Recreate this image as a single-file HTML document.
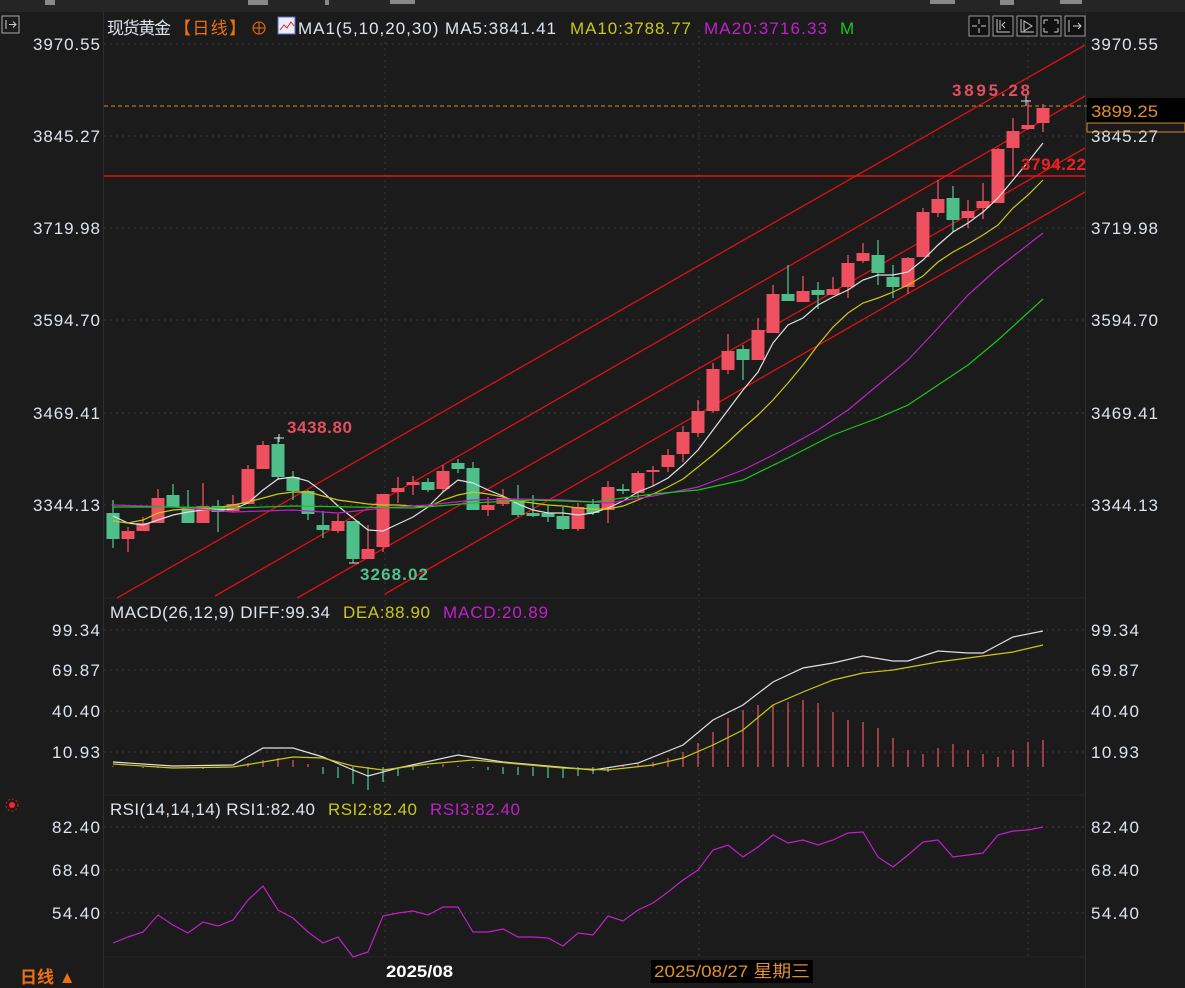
<!DOCTYPE html>
<html><head><meta charset="utf-8">
<style>
html,body{margin:0;padding:0;background:#1b1b1b;width:1185px;height:988px;overflow:hidden}
svg{display:block}
text{font-family:"Liberation Sans","Noto Sans CJK SC",sans-serif}
</style></head><body>
<svg id="s" width="1185" height="988" xmlns="http://www.w3.org/2000/svg">
<rect width="1185" height="988" fill="#1b1b1b"/>
<rect width="1185" height="12" fill="#252525"/>
<g fill="#888"><rect x="45" y="0" width="10" height="5"/><rect x="248" y="0" width="20" height="5"/><rect x="325" y="0" width="4" height="5"/><rect x="390" y="0" width="25" height="4"/><rect x="930" y="0" width="25" height="4"/><rect x="1000" y="0" width="14" height="5"/><rect x="1060" y="0" width="22" height="4"/></g>
<line x1="103.5" y1="12" x2="103.5" y2="988" stroke="#2e2e2e"/>
<line x1="1085.5" y1="12" x2="1085.5" y2="988" stroke="#2e2e2e"/>
<g stroke="#3a3a3a" stroke-dasharray="2,4">
<line x1="104" y1="44" x2="1085" y2="44"/><line x1="104" y1="136" x2="1085" y2="136"/><line x1="104" y1="228" x2="1085" y2="228"/><line x1="104" y1="320" x2="1085" y2="320"/><line x1="104" y1="413" x2="1085" y2="413"/><line x1="104" y1="505" x2="1085" y2="505"/>
<line x1="104" y1="630" x2="1085" y2="630"/><line x1="104" y1="670" x2="1085" y2="670"/><line x1="104" y1="711" x2="1085" y2="711"/><line x1="104" y1="752" x2="1085" y2="752"/>
<line x1="104" y1="827" x2="1085" y2="827"/><line x1="104" y1="870" x2="1085" y2="870"/><line x1="104" y1="913" x2="1085" y2="913"/>
<line x1="385" y1="30" x2="385" y2="960"/><line x1="699" y1="30" x2="699" y2="960"/><line x1="1028" y1="30" x2="1028" y2="960"/>
</g>
<line x1="104" y1="598" x2="1085" y2="598" stroke="#252525"/>
<line x1="104" y1="795" x2="1085" y2="795" stroke="#252525"/>
<line x1="104" y1="957" x2="1085" y2="957" stroke="#252525"/>
<g stroke="#e01010" stroke-width="1.3">
<line x1="117" y1="598" x2="1085" y2="45"/>
<line x1="215" y1="596" x2="1085" y2="96"/>
<line x1="297" y1="598" x2="1085" y2="148"/>
<line x1="385" y1="594" x2="1085" y2="192"/>
<line x1="104" y1="176" x2="1085" y2="176" stroke="#ee1010" stroke-width="1.5"/>
</g>
<line x1="104" y1="106" x2="1185" y2="106" stroke="#d08a30" stroke-dasharray="4,3"/>
<g id="cd"></g>
<g id="ln" fill="none" stroke-width="1.2"></g>
<g font-size="17" fill="#dde4ee" lengthAdjust="spacingAndGlyphs">
<text x="33" y="50" textLength="67">3970.55</text><text x="33" y="142" textLength="67">3845.27</text><text x="33" y="234" textLength="67">3719.98</text><text x="33" y="326" textLength="67">3594.70</text><text x="33" y="419" textLength="67">3469.41</text><text x="33" y="511" textLength="67">3344.13</text>
<text x="1091" y="50" textLength="67">3970.55</text><text x="1091" y="142" textLength="67">3845.27</text><text x="1091" y="234" textLength="67">3719.98</text><text x="1091" y="326" textLength="67">3594.70</text><text x="1091" y="419" textLength="67">3469.41</text><text x="1091" y="511" textLength="67">3344.13</text>
<text x="52" y="636" textLength="48">99.34</text><text x="52" y="676" textLength="48">69.87</text><text x="52" y="717" textLength="48">40.40</text><text x="52" y="758" textLength="48">10.93</text>
<text x="1091" y="636" textLength="48">99.34</text><text x="1091" y="676" textLength="48">69.87</text><text x="1091" y="717" textLength="48">40.40</text><text x="1091" y="758" textLength="48">10.93</text>
<text x="52" y="833" textLength="48">82.40</text><text x="52" y="876" textLength="48">68.40</text><text x="52" y="919" textLength="48">54.40</text>
<text x="1091" y="833" textLength="48">82.40</text><text x="1091" y="876" textLength="48">68.40</text><text x="1091" y="919" textLength="48">54.40</text>
</g>
<rect x="1087" y="98" width="98" height="25" fill="#000"/>
<rect x="1087" y="123" width="98" height="9" fill="none" stroke="#d08a30"/>
<text x="1091" y="117" font-size="17" fill="#e0902a" textLength="67" lengthAdjust="spacingAndGlyphs">3899.25</text>
<rect x="2" y="16" width="17" height="17" fill="none" stroke="#aaa"/><path d="M6 20v9M9 24.5h7M13 21.5l3 3-3 3" stroke="#ccc" fill="none"/>
<g font-size="17" lengthAdjust="spacingAndGlyphs">
<text x="107" y="34" fill="#dde4ee" textLength="64">现货黄金</text>
<text x="174" y="34" fill="#f07010" textLength="72">【日线】</text>
<text x="298" y="34" fill="#dde4ee" textLength="258">MA1(5,10,20,30) MA5:3841.41</text>
<text x="570" y="34" fill="#c8c81a" textLength="121">MA10:3788.77</text>
<text x="704" y="34" fill="#c020c8" textLength="123">MA20:3716.33</text>
<text x="840" y="34" fill="#18c818">M</text>
</g>
<circle cx="259" cy="28" r="6" fill="none" stroke="#f07010"/><path d="M253 28h12M259 22v12" stroke="#f07010"/>
<rect x="278" y="17" width="17" height="17" fill="#e8eef8" stroke="#5566cc"/><path d="M280 30l4-5 3 3 4-6 3 4" stroke="#d22" fill="none"/>
<g fill="#111" stroke="#999"><rect x="969" y="16" width="20" height="20"/><rect x="993" y="16" width="20" height="20"/><rect x="1017" y="16" width="20" height="20"/><rect x="1041" y="16" width="20" height="20"/><rect x="1065" y="16" width="20" height="20"/></g>
<g stroke="#ccc" fill="none"><path d="M979 19v5M979 28v5M972 26h5M981 26h5"/><path d="M997 19v13h13M1000 20v10M1005 22l-3 3 3 3"/><path d="M1021 19v13h13M1024 21l8 5-8 5z"/><path d="M1044 20h4M1044 20v4M1058 20h-4M1058 20v4M1044 32h4M1044 32v-4M1058 32h-4M1058 32v-4"/><path d="M1069 20v12M1073 26h8M1078 23l3 3-3 3"/></g>
<g font-size="17" font-weight="bold" lengthAdjust="spacingAndGlyphs">
<text x="952" y="96" fill="#e05060" textLength="78">3895.28</text>
<text x="1021" y="170" fill="#ee2020" textLength="65">3794.22</text>
<text x="287" y="433" fill="#e05060" textLength="65">3438.80</text>
<text x="360" y="580" fill="#50c090" textLength="68">3268.02</text>
</g>
<path d="M1021 101h10M1026 96v10" stroke="#ddd"/>
<path d="M274 438h10M279 434v8" stroke="#ddd"/>
<path d="M349 563h10" stroke="#ddd"/>
<g font-size="17" lengthAdjust="spacingAndGlyphs">
<text x="110" y="618" fill="#dde4ee" textLength="220">MACD(26,12,9) DIFF:99.34</text>
<text x="343" y="618" fill="#c8c81a" textLength="87">DEA:88.90</text>
<text x="443" y="618" fill="#c020c8" textLength="105">MACD:20.89</text>
<text x="110" y="815" fill="#dde4ee" textLength="205">RSI(14,14,14) RSI1:82.40</text>
<text x="328" y="815" fill="#c8c81a" textLength="89">RSI2:82.40</text>
<text x="430" y="815" fill="#c020c8" textLength="90">RSI3:82.40</text>
</g>
<circle cx="12" cy="805" r="3" fill="#f22"/><circle cx="12" cy="805" r="6" fill="none" stroke="#c22" stroke-dasharray="2,2"/>
<text x="20" y="983" font-size="17" fill="#f07010" font-weight="bold">日线 ▲</text>
<text x="386" y="977" font-size="17" fill="#fff" font-weight="bold" textLength="67" lengthAdjust="spacingAndGlyphs">2025/08</text>
<rect x="651" y="960" width="162" height="23" fill="#000"/>
<text x="654" y="977" font-size="17" fill="#e0902a" textLength="156" lengthAdjust="spacingAndGlyphs">2025/08/27 星期三</text>
</svg>
<script>
var C=[[1,513,539,500,548],[0,531,539,527,552],[0,523,531,517,531],[0,498,523,489,523],[1,495,507,484,507],[1,507,523,490,523],[0,506,523,483,523],[1,506,512,500,532],[0,504,511,495,512],[0,469,504,465,504],[0,445,469,441,469],[1,444,477,437,480],[1,477,491,471,500],[1,491,514,490,520],[1,525,530,511,538],[0,521,531,514,533],[1,521,559,521,563],[0,549,559,525,559],[0,494,547,494,552],[0,488,492,477,503],[0,482,485,476,495],[1,482,490,478,492],[0,471,489,465,492],[1,463,469,459,473],[1,468,510,462,510],[0,505,510,497,516],[0,498,504,489,506],[1,500,515,485,517],[1,513,516,495,517],[1,513,517,505,522],[1,516,529,507,530],[0,507,529,503,531],[1,504,513,499,515],[0,487,510,481,523],[1,489,491,484,494],[0,473,493,471,498],[0,470,472,466,486],[0,455,467,449,472],[0,432,454,426,462],[0,411,433,400,437],[0,369,411,363,413],[0,351,370,334,374],[1,349,360,345,380],[0,330,360,318,360],[0,294,333,285,333],[1,294,301,265,301],[0,291,302,276,302],[1,290,295,282,309],[0,289,295,277,295],[0,263,287,255,298],[0,253,261,243,263],[1,255,273,240,285],[1,277,287,265,298],[0,258,287,257,294],[0,212,257,208,257],[0,199,213,180,217],[1,198,220,186,232],[0,211,218,200,228],[0,201,208,183,219],[0,149,203,148,203],[0,131,148,118,176],[0,125,129,100,130],[0,108,123,104,132]];
var NS="http://www.w3.org/2000/svg",g=document.getElementById('cd'),L=document.getElementById('ln');
function el(p,t,a){var e=document.createElementNS(NS,t);for(var k in a)e.setAttribute(k,a[k]);p.appendChild(e);return e}
C.forEach(function(c,i){var x=113+15*i,col=c[0]?'#4fbf8a':'#ee5060';el(g,'line',{x1:x,x2:x,y1:c[3],y2:c[4],stroke:col,'stroke-width':1.3});el(g,'rect',{x:x-6.5,y:c[1],width:13,height:Math.max(2,c[2]-c[1]),fill:col});});
var H2=[766,767,768,768,767,768,769,768,767,763,760,758,760,764,774,778,784,790,782,776,770,768,764,766,768,770,774,775,776,778,778,776,774,772,766,764,762,758,752,743,732,718,710,705,705,702,700,703,712,720,722,728,738,750,754,748,744,750,754,757,750,742,740];
H2.forEach(function(y,i){var x=113+15*i,up=y<767;el(g,'line',{x1:x,x2:x,y1:767,y2:y,stroke:up?'#e05060':'#4fbf8a','stroke-width':1.3});});
function pl(s,col){el(L,'polyline',{points:s,stroke:col});}
pl("113,516 128,523 143,525 158,520 173,515 188,512 203,510 218,510 233,509 248,503 263,490 278,479 293,477 308,481 323,492 338,506 353,518 368,530 383,531 398,524 413,517 428,507 443,492 458,480 473,483 488,490 503,496 518,504 533,510 548,513 563,513 578,515 593,513 608,508 623,501 638,492 653,486 668,478 683,465 698,450 713,430 728,410 743,390 758,372 773,343 788,325 803,318 818,305 833,297 848,290 863,280 878,275 893,275 908,272 923,260 938,245 953,232 968,223 983,212 998,198 1013,180 1028,162 1043,143","#e0e0e0");
pl("113,521 128,523 143,520 158,513 173,510 188,509 203,509 218,508 233,505 248,502 263,498 278,494 293,492 308,492 323,496 338,500 353,502 368,504 383,505 398,505 413,506 428,507 443,500 458,495 473,492 488,494 503,497 518,501 533,503 548,505 563,506 578,508 593,509 608,509 623,506 638,500 653,494 668,487 683,479 698,467 713,455 728,442 743,428 758,415 773,400 788,383 803,365 818,345 833,327 848,313 863,303 878,298 893,292 908,285 923,276 938,262 953,252 968,244 983,235 998,225 1013,208 1028,195 1043,180","#c8c81a");
pl("113,505 173,507 233,512 263,511 293,510 338,513 383,508 428,505 473,500 518,499 563,500 608,503 653,496 698,487 743,470 773,455 818,430 848,410 878,385 908,360 938,328 968,295 998,268 1043,233","#c020c8");
pl("113,507 173,507 233,508 293,506 353,507 413,508 473,503 533,500 593,502 653,494 698,490 743,480 788,458 833,435 878,418 908,405 938,385 968,365 998,340 1043,299","#18c818");
pl("113,762 173,766 233,765 263,748 293,748 323,757 353,770 368,776 398,768 458,755 503,762 548,766 593,770 638,763 683,745 713,720 743,705 773,682 803,668 833,663 863,656 893,661 908,661 938,651 968,653 983,653 998,645 1013,637 1043,631","#e0e0e0");
pl("113,764 173,768 233,767 293,757 323,758 353,766 383,770 428,764 473,760 518,764 563,768 608,770 653,765 683,758 713,745 743,730 773,705 803,692 833,680 863,673 893,670 938,662 983,656 1013,652 1043,645","#c8c81a");
pl("113,943 128,937 143,932 158,915 173,925 188,933 203,922 218,926 233,920 248,900 263,886 278,910 293,918 308,932 323,943 338,937 353,957 368,952 383,916 398,913 413,911 428,915 443,907 458,907 473,932 488,932 503,929 518,937 533,937 548,938 563,946 578,933 593,935 608,916 623,921 638,910 653,903 668,892 683,880 698,870 713,850 728,845 743,857 758,847 773,835 788,843 803,840 818,845 833,840 848,833 863,832 878,857 893,867 908,855 923,842 938,840 953,857 968,855 983,853 998,835 1013,831 1028,830 1043,827","#c020c8");
</script>
</body></html>
